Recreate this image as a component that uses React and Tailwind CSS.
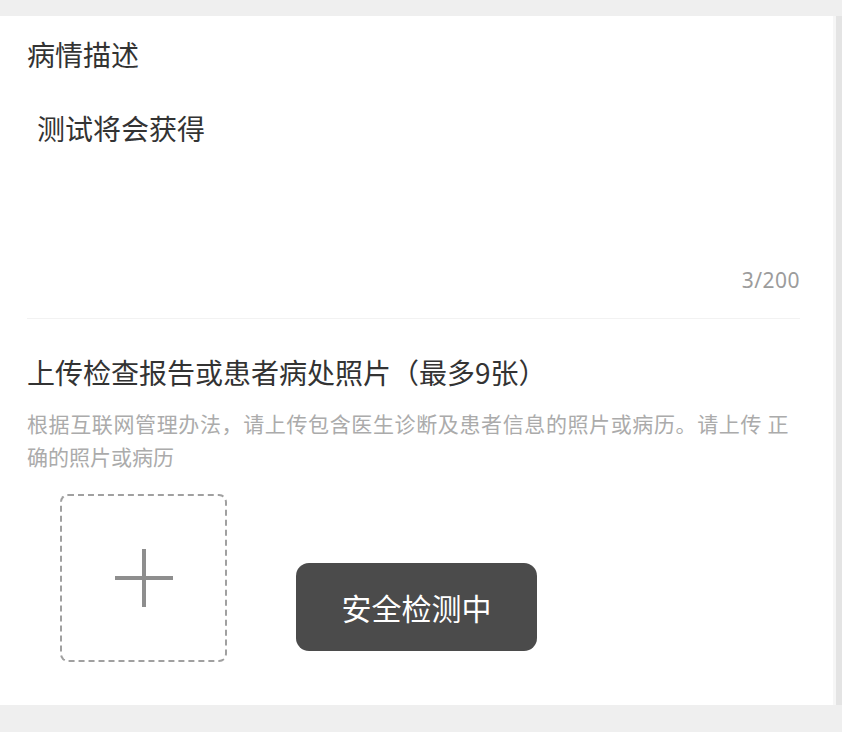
import React from "react";

const FONT = { fontFamily: '"Noto Sans CJK SC", "Noto Sans", sans-serif' };

export default function App() {
  return (
    <div className="relative w-[842px] h-[732px] bg-[#efefef] overflow-hidden" style={FONT}>
      <div className="flex pt-[16px] h-[705px]">
        <div className="w-[833px] bg-white pl-[27px] pr-[33px] pt-[17px]">
          <div className="text-[28px] leading-[42px] text-[#333]">病情描述</div>
          <div className="mt-[32px] pl-[10px] text-[28px] leading-[42px] text-[#333]">测试将会获得</div>
          <div className="mt-[117px] text-right text-[21px] leading-[28px] tracking-[0.5px] text-[#9c9c9c]" style={{ fontFamily: '"Noto Sans", sans-serif' }}>
            3/200
          </div>
          <div className="mt-[24px] h-px bg-[#f2f2f2]" />
          <div className="mt-[32px] text-[28px] leading-[42px] text-[#333] whitespace-nowrap">
            上传检查报告或患者病处照片（最多9张）
          </div>
          <div className="mt-[14px] text-[21px] leading-[33px] text-[#ababab]">
            <div className="whitespace-nowrap tracking-[0.62px]">
              根据互联网管理办法，请上传包含医生诊断及患者信息的照片或病历。请上传 正
            </div>
            <div>确的照片或病历</div>
          </div>
          <div className="mt-[21px] ml-[33px] w-[167px] h-[168px] rounded-[8px] border-2 border-dashed border-[#a0a0a0] flex items-center justify-center">
            <div className="relative w-[58px] h-[58px]">
              <div className="absolute left-0 right-0 top-[27px] h-[4px] bg-[#8e8e8e]" />
              <div className="absolute top-0 bottom-0 left-[27px] w-[4px] bg-[#8e8e8e]" />
            </div>
          </div>
        </div>
        <div className="w-[3px] bg-[#f6f6f6]" />
        <div className="flex-1 bg-[#e4e4e4]" />
      </div>
      <div className="absolute left-[296px] top-[563px] w-[241px] h-[88px] rounded-[13px] bg-[#4b4b4b] flex items-center justify-center text-white text-[30px]">
        安全检测中
      </div>
    </div>
  );
}
